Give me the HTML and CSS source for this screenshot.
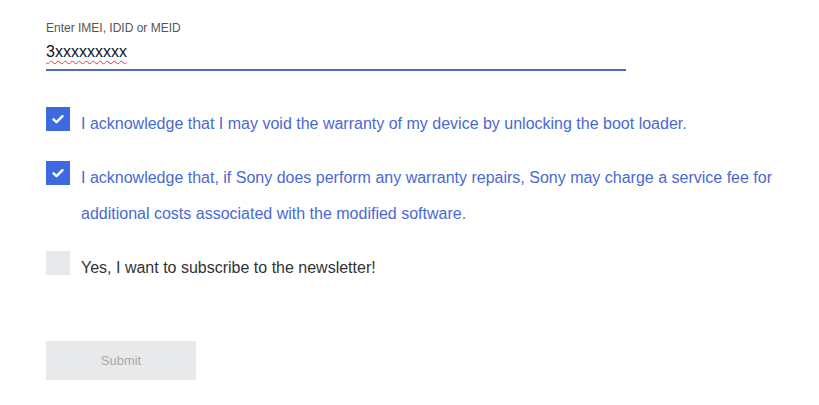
FILE: index.html
```html
<!DOCTYPE html>
<html>
<head>
<meta charset="utf-8">
<link rel="stylesheet" href="styles.css">
</head>
<body>
<form class="form">
  <div class="field">
    <div class="field-label">Enter IMEI, IDID or MEID</div>
    <div class="field-input"><span class="typed">3xxxxxxxxx</span></div>
  </div>
  <div class="checks">
    <div class="check">
      <span class="box box-on"><svg viewBox="0 0 24 24" width="24" height="24"><path d="M7.5 12.3l3 2.9 6-6" fill="none" stroke="#fff" stroke-width="2.4" stroke-linecap="round" stroke-linejoin="round"/></svg></span>
      <span class="check-text blue">I acknowledge that I may void the warranty of my device by unlocking the boot loader.</span>
    </div>
    <div class="check">
      <span class="box box-on"><svg viewBox="0 0 24 24" width="24" height="24"><path d="M7.5 12.3l3 2.9 6-6" fill="none" stroke="#fff" stroke-width="2.4" stroke-linecap="round" stroke-linejoin="round"/></svg></span>
      <span class="check-text blue">I acknowledge that, if Sony does perform any warranty repairs, Sony may charge a service fee for additional costs associated with the modified software.</span>
    </div>
    <div class="check">
      <span class="box box-off"></span>
      <span class="check-text dark">Yes, I want to subscribe to the newsletter!</span>
    </div>
  </div>
  <div class="submit">Submit</div>
</form>
</body>
</html>
```
FILE: styles.css
```css
html, body {
  margin: 0;
  padding: 0;
  background: #fff;
}
body {
  font-family: "Liberation Sans", Arial, sans-serif;
}
.form {
  padding: 21px 0 0 46px;
}
.field {
  width: 580px;
}
.field-label {
  font-size: 12px;
  line-height: 14px;
  color: #555;
  height: 21px;
}
.field-input {
  font-size: 16px;
  line-height: 20px;
  color: #111;
  height: 27px;
  border-bottom: 2px solid #4a6bc3;
}
.typed {
  text-decoration: underline wavy #e04040;
  text-decoration-thickness: 1px;
  text-underline-offset: 3px;
  text-decoration-skip-ink: none;
}
.checks {
  margin-top: 35px;
  display: flex;
  flex-direction: column;
  gap: 18px;
}
.check {
  display: flex;
  align-items: flex-start;
}
.box {
  flex: none;
  width: 24px;
  height: 24px;
  margin-top: 1px;
  margin-right: 11px;
  display: block;
}
.box svg {
  display: block;
}
.box-on {
  background: #3e69e0;
}
.box-off {
  background: #e8e9eb;
}
.check-text {
  font-size: 16px;
  line-height: 36px;
  max-width: 700px;
}
.blue {
  color: #4a69d3;
}
.dark {
  color: #333;
}
.submit {
  margin-top: 55px;
  width: 150px;
  height: 39px;
  background: #e8e9eb;
  color: #a9a9a9;
  font-size: 13px;
  display: flex;
  align-items: center;
  justify-content: center;
}
```
